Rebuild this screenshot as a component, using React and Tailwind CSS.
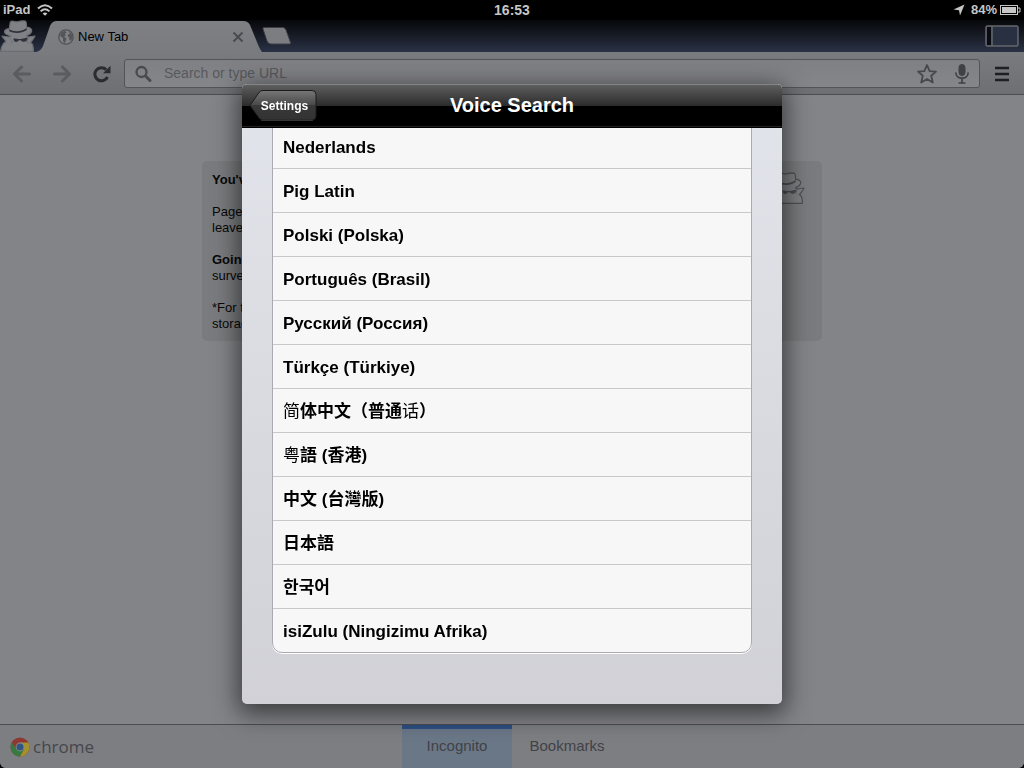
import React, { useState } from "react";

const languages = [
  { id: "nl", label: "Nederlands" },
  { id: "pig", label: "Pig Latin" },
  { id: "pl", label: "Polski (Polska)" },
  { id: "pt", label: "Português (Brasil)" },
  { id: "ru", label: "Русский (Россия)" },
  { id: "tr", label: "Türkçe (Türkiye)" },
  {
    id: "zh-CN",
    label: (
      <>
        <span className="font-normal">简</span>体中文（普通
        <span className="font-normal">话</span>）
      </>
    ),
  },
  {
    id: "yue",
    label: (
      <>
        <span className="font-normal">粤</span>語 (香港)
      </>
    ),
  },
  { id: "zh-TW", label: "中文 (台灣版)" },
  { id: "ja", label: "日本語" },
  { id: "ko", label: "한국어" },
  { id: "zu", label: "isiZulu (Ningizimu Afrika)" },
];

const Spy = ({ className, fill, outline, line }) => (
  <svg viewBox="0 0 36 32" className={className} aria-hidden="true">
    <path
      d="M.6 31.400 Q1 27 3.500 23.500 L6 21.500 L2 16.200 L9 17 L11 15.800 C6.500 15 4 13.500 4.500 11.200 Q5.500 9 9.300 8.600 L10.200 2.600 Q10.500 1 13 1.200 Q17 2.400 20 1.200 L24 .8 Q26 .8 26.200 2.500 L26.600 7.200 C30.500 7.500 32.500 9.500 31.500 11.800 Q30.500 14.300 26.500 15.500 L28 17 L35 16 Q33 20 30.500 22.500 L32.500 24.500 Q33.500 28 33.400 31.400 Z"
      fill={fill}
      stroke={outline}
      strokeWidth="1.200"
      strokeLinejoin="round"
    />
    <path d="M9.200 9.300 C14 12.200 21 12 26.500 8 L26.800 10 C22 13.600 14 13.800 9.300 11.300 Z" fill={line} />
    <path d="M13.500 18.600 Q16 18 18 19 L21 19 Q24 18 27.500 17.500 C28 21.800 23 23.200 20.800 20.300 H18.800 C17.500 23 13.200 22.500 13.500 18.600 Z" fill={line} />
    <path d="M9 17.500 L12.800 22 L10.500 23.500 M28.500 17.500 L26.800 21.800 L29 23.500" fill="none" stroke={line} strokeWidth=".5" opacity=".4" />
  </svg>
);

const ChromeLogo = () => (
  <svg viewBox="0 0 20 20" className="w-5 h-5" aria-hidden="true">
    <circle cx="10" cy="10" r="9.500" fill="#8f3733" />
    <path d="M1.800 5.250 A9.500 9.500 0 0 0 10 19.500 L14 12.300 H6 Z" fill="#367a3f" />
    <path d="M10 19.500 A9.500 9.500 0 0 0 18.300 5.600 H10 L14 12.300 Z" fill="#a3902f" />
    <circle cx="10" cy="10" r="4.400" fill="#8c8d91" />
    <circle cx="10" cy="10" r="3.500" fill="#2f5585" />
  </svg>
);

const StatusBar = () => (
  <div className="grid grid-cols-3 items-center h-[20px] px-[3px] bg-black text-[#c6c6c6] text-[14px] leading-[18px] font-bold">
    <div className="flex items-center gap-[7px]">
      <span className="text-[13px]">iPad</span>
      <svg viewBox="0 0 16 12" className="w-4 h-3" fill="none" stroke="#c6c6c6" strokeWidth="2" aria-hidden="true">
        <path d="M1 4.500 Q8 -2 15 4.500" />
        <path d="M3.600 7.400 Q8 3.200 12.400 7.400" />
        <path d="M8 11.800 L5.600 9.400 Q8 7.500 10.400 9.400 Z" fill="#c6c6c6" stroke="none" />
      </svg>
    </div>
    <span className="text-center">16:53</span>
    <div className="flex items-center justify-end gap-[3px]">
      <svg viewBox="0 0 12 12" className="w-3 h-3 mr-[3px]" aria-hidden="true">
        <path d="M11.500 .5 L7 11.500 L6 6.200 L.5 5.600 Z" fill="#c6c6c6" />
      </svg>
      <span className="text-[13px]">84%</span>
      <svg viewBox="0 0 21 10" className="w-[21px] h-[10px]" aria-hidden="true">
        <rect x=".5" y=".5" width="17" height="9" fill="none" stroke="#c6c6c6" />
        <rect x="2" y="2" width="14" height="6" fill="#c6c6c6" />
        <path d="M18 3 H20 V7 H18" fill="none" stroke="#c6c6c6" />
      </svg>
    </div>
  </div>
);

const TabStrip = () => (
  <div className="flex items-end h-8 bg-gradient-to-b from-[#07080a] to-[#2a3246]">
    <Spy className="w-9 h-8 shrink-0" fill="#808185" outline="#6b6d73" line="#30333c" />
    <div className="relative flex items-center w-[226px] h-[31px] pl-[22px] pr-[18px]">
      <svg viewBox="0 0 226 31" preserveAspectRatio="none" className="absolute inset-0 w-full h-full" aria-hidden="true">
        <defs>
          <linearGradient id="tab" x1="0" y1="0" x2="0" y2="1">
            <stop offset="0" stopColor="#7f8084" />
            <stop offset="1" stopColor="#7a7b7f" />
          </linearGradient>
        </defs>
        <path d="M0 31 Q5 30 7 25 L14 5 Q16 0 21 0 H207 Q212 0 214 4 L223 26 Q225 30 226 31 Z" fill="url(#tab)" />
      </svg>
      <svg viewBox="0 0 16 16" className="relative w-4 h-4 mr-1" aria-hidden="true">
        <circle cx="8" cy="8" r="7.200" fill="#808185" stroke="#4f5054" strokeWidth="1.200" />
        <path d="M3 3.500 L7 1.800 L8.500 3.500 L6.800 5 L8 6.500 L6 7.500 L8.500 9.500 L6.800 14.500 L5 12 L5 9 L2 7 Z M10.500 2 L13.500 4.500 L14.800 8 L13 12 L11.200 10.500 L11.500 8.500 L9.800 7.500 L10 5.500 L12 4.500 Z" fill="#55565a" />
      </svg>
      <span className="relative flex-1 text-[13px] leading-4 text-black">New Tab</span>
      <button type="button" aria-label="Close tab" className="relative">
        <svg viewBox="0 0 12 12" className="w-3 h-3" stroke="#4a4b4f" strokeWidth="2">
          <path d="M1.500 1.500 L10.500 10.500 M10.500 1.500 L1.500 10.500" />
        </svg>
      </button>
    </div>
    <button type="button" aria-label="New tab" className="self-center">
      <svg viewBox="0 0 30 18" className="w-[30px] h-[18px]">
        <path d="M1 2 Q.5 .5 2 .5 H21 Q23 .5 24 3 L28.500 15.500 Q29 17 27.500 17 H9 Q6 17 5 14 Z" fill="#7c7d81" stroke="#3c3f48" />
      </svg>
    </button>
    <button type="button" aria-label="Side panel" className="self-center ml-auto mr-[5px]">
      <svg viewBox="0 0 34 22" className="w-[34px] h-[22px]">
        <rect x="1" y="1" width="32" height="20" rx="1.500" fill="#293042" stroke="#65676d" strokeWidth="1.500" />
        <rect x="2" y="2" width="4" height="18" fill="#090b10" />
        <path d="M7 1 V21" stroke="#65676d" strokeWidth="1.500" />
      </svg>
    </button>
  </div>
);

const Toolbar = () => {
  const [query, setQuery] = useState("");

  return (
    <div className="flex items-center h-[43px] pl-3 pr-[15px] pt-[1px] bg-gradient-to-b from-[#7a7b7f] to-[#6e6f73] border-b border-[#4c4d51]">
      <button type="button" aria-label="Back" className="mr-5">
        <svg viewBox="0 0 20 18" className="w-5 h-[18px]" fill="none" stroke="#5b5c60" strokeWidth="3" strokeLinecap="round" strokeLinejoin="round">
          <path d="M9.500 2 L2.500 9 L9.500 16 M3 9 H17.500" />
        </svg>
      </button>
      <button type="button" aria-label="Forward" className="mr-5">
        <svg viewBox="0 0 20 18" className="w-5 h-[18px]" fill="none" stroke="#5b5c60" strokeWidth="3" strokeLinecap="round" strokeLinejoin="round">
          <path d="M10.500 2 L17.500 9 L10.500 16 M17 9 H2.500" />
        </svg>
      </button>
      <button type="button" aria-label="Reload" className="mr-3">
        <svg viewBox="0 0 20 18" className="w-5 h-[18px]" fill="none" stroke="#2b2c30" strokeWidth="3">
          <path d="M14.200 4.600 A6.600 6.600 0 1 0 15.500 12" />
          <path d="M18.500 .8 V8.300 H11 Z" fill="#2b2c30" stroke="none" />
        </svg>
      </button>
      <div className="flex items-center flex-1 h-[29px] px-2 rounded-[3px] border border-[#535458] bg-gradient-to-b from-[#7f8084] to-[#85868a]">
        <label htmlFor="omnibox" aria-label="Address">
          <svg viewBox="0 0 20 20" className="w-5 h-5 mr-[11px]" fill="none" stroke="#494a4e" strokeLinecap="round">
            <circle cx="8.500" cy="8" r="5" strokeWidth="2.300" />
            <path d="M12.500 12 L17 16.500" strokeWidth="3" />
          </svg>
        </label>
        <input
          id="omnibox"
          type="text"
          placeholder="Search or type URL"
          className="flex-1 min-w-0 bg-transparent outline-none text-[14px] text-black placeholder-[#58595d]"
          value={query}
          onChange={(e) => setQuery(e.target.value)}
        />
        <button type="button" aria-label="Bookmark this page" className="mr-4">
          <svg viewBox="0 0 22 22" className="w-[22px] h-[22px]" fill="none" stroke="#47484c" strokeWidth="1.800" strokeLinejoin="round">
            <path d="M11 2 L13.700 8.200 L20 8.600 L15.200 12.800 L16.800 19.500 L11 16 L5.200 19.500 L6.800 12.800 L2 8.600 L8.300 8.200 Z" />
          </svg>
        </button>
        <button type="button" aria-label="Voice search" className="mr-[1px]">
          <svg viewBox="0 0 16 22" className="w-4 h-[22px]" fill="none" stroke="#404145" strokeWidth="1.700">
            <rect x="5" y="1.500" width="6" height="11" rx="3" fill="#404145" stroke="#404145" strokeWidth="1" />
            <path d="M1.800 9.500 C1.800 17 14.200 17 14.200 9.500 M8 15 V20 M4.500 20 H11.500" />
          </svg>
        </button>
      </div>
      <button type="button" aria-label="Menu" className="ml-[15px]">
        <svg viewBox="0 0 14 16" className="w-[14px] h-4" stroke="#1e1f23" strokeWidth="2.400">
          <path d="M0 2 H14 M0 8 H14 M0 14 H14" />
        </svg>
      </button>
    </div>
  );
};

const IncognitoCard = () => (
  <div className="flex items-start w-[620px] max-w-full mx-auto mt-[66px] pt-[11px] pb-[9px] pl-[10px] pr-[17px] rounded-[5px] bg-[#7a7b7e] text-[13px] leading-4 text-[#080808]">
    <div className="flex-1 space-y-4">
      <h2 className="font-bold">You've</h2>
      <p>
        Pages
        <br />
        leave
      </p>
      <p>
        <b>Going</b>
        <br />
        survey
      </p>
      <p>
        *For tabs
        <br />
        storage
      </p>
    </div>
    <Spy className="w-9 h-8" fill="#7e7f82" outline="#4f5054" line="#4a4b4f" />
  </div>
);

const BottomBar = () => (
  <nav className="grid grid-cols-[1fr_auto_1fr] h-11 border-t border-[#4c4d51] bg-[#7d7e82] text-[#414246]">
    <a href="#chrome" className="flex items-center gap-[3px] pl-[10px] font-['Open_Sans',sans-serif] text-[17px]">
      <ChromeLogo />
      <span className="leading-5 text-[#45464a]">chrome</span>
    </a>
    <div className="flex text-[15px]">
      <a href="#incognito" className="flex items-center justify-center w-[110px] pb-1 border-t-4 border-[#2c4f82] bg-[#6a7787]">
        Incognito
      </a>
      <a href="#bookmarks" className="flex items-center justify-center w-[110px]">
        Bookmarks
      </a>
    </div>
  </nav>
);

const VoiceSearchDialog = () => {
  return (
    <div className="fixed inset-0 flex items-start justify-center pt-[84px] pb-16">
      <div
        role="dialog"
        aria-labelledby="dialog-title"
        className="flex flex-col w-[540px] max-w-full h-full rounded-[5px] overflow-hidden bg-gradient-to-b from-[#e2e5eb] to-[#d1d1d7] shadow-[0_6px_24px_4px_rgba(0,0,0,0.55)]"
      >
        {/* Header */}
        <div className="grid grid-cols-[1fr_auto_1fr] items-center h-11 shrink-0 px-[7px] pb-[2px] border-t border-[#858589] bg-[linear-gradient(#5e5e5e,#2a2a2a_50%,#000_50%,#000_94%,#2a2a2a_96%,#000_98%)]">
          <button type="button" className="relative justify-self-start w-[68px] h-[31px] pl-[3px] text-[12px] font-bold text-white">
            <svg viewBox="0 0 68 31" className="absolute inset-0 w-full h-full" aria-hidden="true">
              <defs>
                <linearGradient id="back" x1="0" y1="0" x2="0" y2="1">
                  <stop offset="0" stopColor="#777" />
                  <stop offset=".5" stopColor="#484848" />
                  <stop offset=".5" stopColor="#383838" />
                  <stop offset="1" stopColor="#333" />
                </linearGradient>
              </defs>
              <path d="M14 .5 H63 Q67 .5 67 4.500 V26 Q67 30 63 30 H14 Q11.500 30 10 28 L1 15.500 L10 2.500 Q11.500 .5 14 .5 Z" fill="url(#back)" stroke="#1c1c1c" />
              <path d="M12 30.300 H64" stroke="#555" strokeWidth=".7" />
            </svg>
            <span className="relative">Settings</span>
          </button>
          <h1 id="dialog-title" className="pb-[2px] text-[20px] leading-6 font-bold text-white">
            Voice Search
          </h1>
        </div>

        {/* Language list, scrolled to its end */}
        <div className="flex-1 min-h-0 overflow-hidden px-[30px]">
          <ul className="-mt-1 rounded-b-[10px] border border-[#a9abb0] bg-[#f7f7f7] shadow-[0_1px_0_#fff] overflow-hidden divide-y divide-[#c9c9cb]">
            {languages.map((language) => (
              <li key={language.id}>
                <button
                  type="button"
                  className="block w-full h-[43px] pt-[2px] px-[10px] text-left text-[17px] leading-5 font-bold text-black"
                >
                  {language.label}
                </button>
              </li>
            ))}
          </ul>
        </div>
      </div>
    </div>
  );
};

const App = () => {
  return (
    <div className="min-h-screen bg-black font-['Liberation_Sans','Noto_Sans_CJK_SC','Noto_Sans_CJK_KR',sans-serif]">
      <div className="flex flex-col min-h-screen rounded-b-[6px] overflow-hidden bg-[#838488]">
        <StatusBar />
        <TabStrip />
        <Toolbar />
        <main className="flex-1">
          <IncognitoCard />
        </main>
        <BottomBar />
      </div>
      <VoiceSearchDialog />
    </div>
  );
};

export default App;
